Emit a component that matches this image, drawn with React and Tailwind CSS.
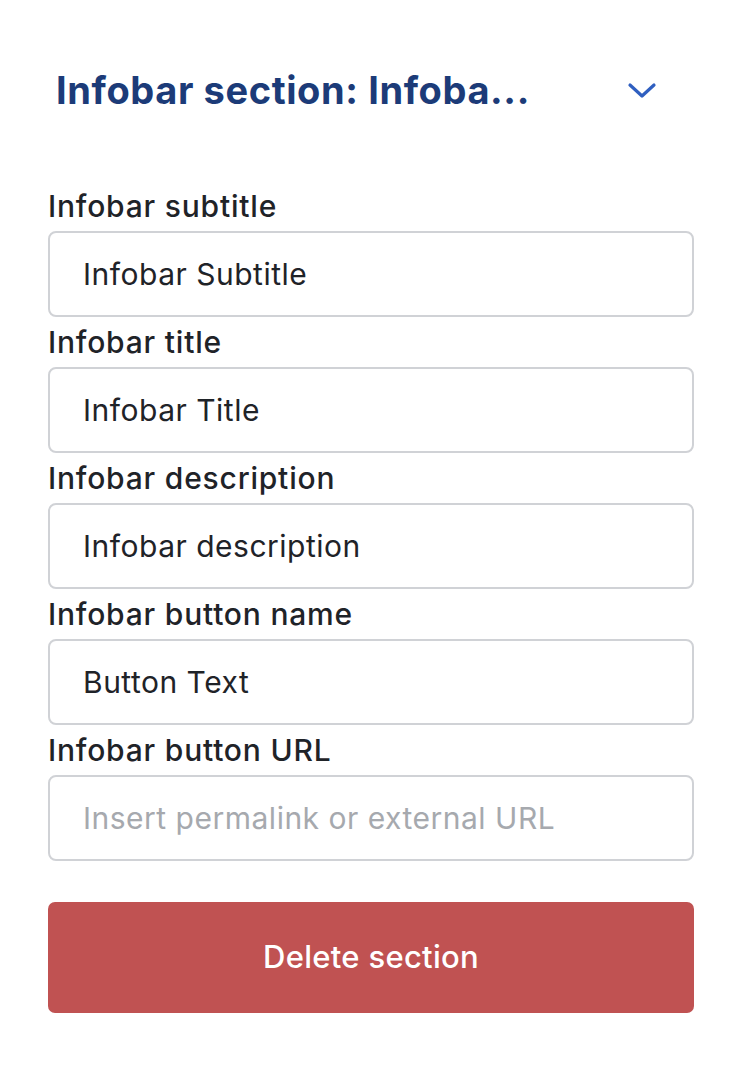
import React from 'react';

const fields = [
  { label: 'Infobar subtitle', value: 'Infobar Subtitle' },
  { label: 'Infobar title', value: 'Infobar Title' },
  { label: 'Infobar description', value: 'Infobar description' },
  { label: 'Infobar button name', value: 'Button Text' },
  { label: 'Infobar button URL', value: '', placeholder: 'Insert permalink or external URL' },
];

export default function App() {
  return (
    <div
      className="min-h-screen bg-white px-[48px] pt-[62px]"
      style={{ fontFamily: 'Inter, "Noto Sans", sans-serif' }}
    >
      <div className="flex items-center justify-between pl-[8px] pr-[37px] h-[56px]">
        <h2 className="text-[38px] font-bold text-[#1c3b78] tracking-[0.6px] leading-none">
          Infobar section: Infoba...
        </h2>
        <svg width="30" height="18" viewBox="0 0 30 18" fill="none">
          <path d="M3 4 L15 15 L27 4" stroke="#2f5fc0" strokeWidth="3.2" strokeLinecap="round" strokeLinejoin="round" />
        </svg>
      </div>

      <div className="mt-[71px] flex flex-col">
        {fields.map((f, i) => (
          <div key={f.label} className={i === 0 ? 'flex flex-col' : 'flex flex-col mt-[8px]'}>
            <label className="text-[30px] font-medium text-[#1f2328] leading-[34px] tracking-[0.8px]">{f.label}</label>
            <input
              readOnly
              defaultValue={f.value}
              placeholder={f.placeholder}
              className="mt-[8px] h-[86px] w-full rounded-[8px] border-2 border-[#d0d2d6] px-[33px] text-[30px] tracking-[0.5px] text-[#1f2328] placeholder:text-[#a6a9ae] outline-none"
            />
          </div>
        ))}
      </div>

      <button
        type="button"
        className="mt-[41px] h-[111px] w-full rounded-[7px] bg-[#c05252] text-[31px] tracking-[0.3px] font-medium text-white"
      >
        Delete section
      </button>
    </div>
  );
}
